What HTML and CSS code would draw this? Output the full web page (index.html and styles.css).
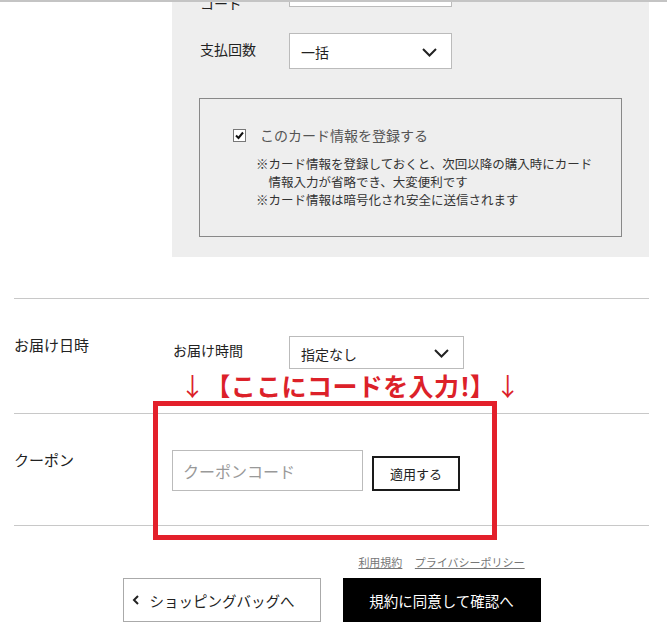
FILE: index.html
```html
<!DOCTYPE html>
<html lang="ja">
<head>
    <meta charset="UTF-8">
    <meta name="viewport" content="width=device-width, initial-scale=1.0">
    <title>ご注文手続き</title>
    <link rel="stylesheet" href="styles.css">
</head>
<body>
    <!-- Header edge (page is scrolled) -->
    <div class="top-edge"></div>

    <main class="page">
        <!-- Payment -->
        <section class="row pay-row">
            <div class="row-label"></div>
            <div class="pay-panel">
                <div class="field">
                    <span class="field-label field-label-cut">セキュリティ<br>コード</span>
                    <div class="textbox"></div>
                </div>
                <div class="field field-gap">
                    <span class="field-label">支払回数</span>
                    <div class="select">
                        <span>一括</span>
                        <svg class="chev" width="15" height="9" viewBox="0 0 15 9"><polyline points="1,1 7.5,7.5 14,1" fill="none" stroke="#222" stroke-width="2"/></svg>
                    </div>
                </div>
                <div class="save-box">
                    <label class="check">
                        <span class="checkbox">
                            <svg width="11" height="11" viewBox="0 0 11 11"><polyline points="2,5.5 4.5,8 9,2.5" fill="none" stroke="#111" stroke-width="2"/></svg>
                        </span>
                        このカード情報を登録する
                    </label>
                    <p class="note first">※カード情報を登録しておくと、次回以降の購入時にカード<br>情報入力が省略でき、大変便利です</p>
                    <p class="note">※カード情報は暗号化され安全に送信されます</p>
                </div>
            </div>
        </section>

        <!-- Delivery -->
        <section class="row line-row delivery-row">
            <div class="row-label">お届け日時</div>
            <div class="delivery">
                <span class="sub-label">お届け時間</span>
                <div class="select select-time">
                    <span>指定なし</span>
                    <svg class="chev" width="15" height="9" viewBox="0 0 15 9"><polyline points="1,1 7.5,7.5 14,1" fill="none" stroke="#222" stroke-width="2"/></svg>
                </div>
            </div>
        </section>

        <!-- Coupon -->
        <section class="row line-row coupon-row">
            <div class="row-label">クーポン</div>
            <div class="coupon">
                <input class="coupon-input" type="text" placeholder="クーポンコード">
                <button class="apply-btn">適用する</button>
            </div>

            <!-- annotation drawn over the form -->
            <div class="mark-text"><span class="arrow">↓</span>【ここにコードを入力<span class="bang">！</span>】<span class="arrow">↓</span></div>
            <div class="mark-box"></div>
        </section>

        <!-- Footer buttons -->
        <section class="actions">
            <div class="links">
                <a href="#">利用規約</a>
                <a href="#">プライバシーポリシー</a>
            </div>
            <a class="back-btn" href="#">
                <svg width="8" height="10" viewBox="0 0 8 10"><polyline points="6,1 2,5 6,9" fill="none" stroke="#222" stroke-width="2"/></svg>
                ショッピングバッグへ
            </a>
            <a class="next-btn" href="#">規約に同意して確認へ</a>
        </section>
    </main>
</body>
</html>
```

FILE: styles.css
```css
body {
    margin: 0;
    padding: 0;
    color: #222;
    background: #fff;
    font-family: "Noto Sans CJK JP", "Noto Sans", sans-serif;
    overflow: hidden;
}

.top-edge {
    position: fixed;
    top: 0;
    left: 0;
    right: 0;
    height: 2px;
    background-color: #c4c4c4;
    z-index: 10;
}

/* page is scrolled: panel starts above the window */
.page {
    margin: -49px 18px 0 14px;
}

.row {
    display: grid;
    grid-template-columns: 158px 1fr;
}

.row-label {
    font-size: 15px;
    line-height: 22px;
}

.line-row {
    border-top: 1px solid #c8c8c8;
}

/* Payment panel */
.pay-row {
    padding-bottom: 41px;
}

.pay-panel {
    background-color: #eeeeee;
    padding: 20px 0 20px 28px;
}

.field {
    display: flex;
    align-items: flex-start;
}

.field-gap {
    margin-top: 26px;
}

.field-label {
    width: 89px;
    font-size: 14px;
    line-height: 18px;
    padding-top: 7px;
}

.field-label-cut {
    padding-top: 5px;
    margin-bottom: -5px;
}

.textbox {
    width: 163px;
    height: 36px;
    box-sizing: border-box;
    background: #fff;
    border: 1px solid #bbb;
}

.select {
    width: 163px;
    height: 36px;
    box-sizing: border-box;
    background: #fff;
    border: 1px solid #bbb;
    display: flex;
    align-items: center;
    justify-content: space-between;
    padding: 2px 14px 0 11px;
    font-size: 14px;
}

.select-time {
    width: 175px;
    height: 33px;
}

.save-box {
    margin: 29px 27px 0 -1px;
    border: 1px solid #888;
    padding: 26px 0 27px 33px;
}

.check {
    display: flex;
    align-items: center;
    font-size: 14px;
    line-height: 20px;
    color: #555;
}

.checkbox {
    width: 13px;
    height: 13px;
    box-sizing: border-box;
    border: 1px solid #777;
    background: #fff;
    margin-right: 14px;
    display: flex;
    align-items: center;
    justify-content: center;
}

.note {
    margin: 0 0 0 23px;
    padding-left: 12.5px;
    text-indent: -12.5px;
    font-size: 12.5px;
    line-height: 18px;
    color: #333;
}

.note.first {
    margin-top: 10px;
}

/* Delivery */
.delivery-row {
    padding: 35px 0 44px;
}

.delivery {
    display: flex;
    align-items: flex-start;
    padding-top: 2px;
}

.sub-label {
    width: 116px;
    padding: 5px 0 0 1px;
    font-size: 14px;
    line-height: 18px;
}

/* Coupon */
.coupon-row {
    position: relative;
    padding: 36px 0 34px;
}

.coupon-row .row-label {
    margin-top: -1px;
}

.coupon {
    display: flex;
    align-items: flex-end;
}

.coupon-input {
    width: 191px;
    height: 41px;
    box-sizing: border-box;
    border: 1px solid #bbb;
    padding: 0 10px;
    font-family: inherit;
    font-size: 16px;
    margin: 0;
}

.coupon-input::placeholder {
    color: #999;
}

.apply-btn {
    width: 88px;
    height: 35px;
    margin: 0 0 0 9px;
    box-sizing: border-box;
    border: 2px solid #1a1a1a;
    background: #fff;
    font-family: inherit;
    font-size: 13px;
    color: #222;
    padding: 0;
}

.mark-text {
    position: absolute;
    top: -44px;
    left: 166px;
    font-size: 25px;
    line-height: 30px;
    font-weight: bold;
    letter-spacing: 0.4px;
    color: #dc2129;
    white-space: nowrap;
}

.mark-text .arrow {
    font-weight: normal;
}

.bang {
    margin-left: -7px;
    margin-right: -8px;
}

.mark-box {
    position: absolute;
    top: -13px;
    left: 139px;
    width: 344px;
    height: 139px;
    box-sizing: border-box;
    border: 5px solid #e3202b;
}

/* Footer actions */
.actions {
    border-top: 1px solid #c8c8c8;
    padding-top: 28px;
    display: grid;
    grid-template-columns: 198px 198px;
    column-gap: 22px;
    justify-content: center;
}

.links {
    grid-column: 2;
    text-align: center;
    font-size: 11px;
    line-height: 16px;
    margin-bottom: 8px;
}

.links a {
    color: #777;
    margin: 0 5px;
}

.back-btn,
.next-btn {
    height: 44px;
    box-sizing: border-box;
    display: flex;
    align-items: center;
    font-size: 14.5px;
    text-decoration: none;
}

.back-btn {
    grid-column: 1;
    border: 1px solid #aaa;
    color: #222;
    padding-left: 8px;
    gap: 10px;
}

.next-btn {
    grid-column: 2;
    background: #000;
    color: #fff;
    justify-content: center;
}
```
